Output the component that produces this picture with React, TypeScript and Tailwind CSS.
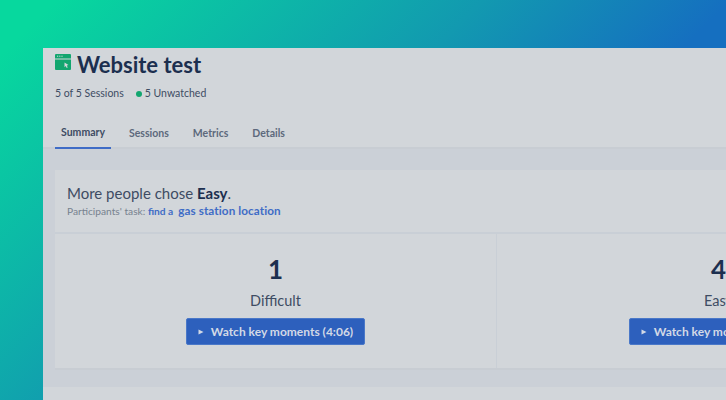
const font = "font-['Lato','Noto_Sans',sans-serif]";

function SessionIcon() {
  return (
    <svg width="16" height="16" viewBox="0 0 16 16" className="shrink-0">
      <path d="M0 1a1 1 0 0 1 1-1h14a1 1 0 0 1 1 1v3.4H0z" fill="#12a66f" />
      <rect x="2" y="1.7" width="1.2" height="1" fill="#d3d7db" />
      <rect x="4.2" y="1.7" width="1.2" height="1" fill="#d3d7db" />
      <rect x="6.4" y="1.7" width="1.2" height="1" fill="#d3d7db" />
      <path d="M0 5.4h16V15a1 1 0 0 1-1 1H1a1 1 0 0 1-1-1z" fill="#12a66f" />
      <path d="M9.5 8.5l4 2.6-1.7.5 .9 1.8-1 .5-.9-1.8-1.3 1.2z" fill="#d3d7db" />
    </svg>
  );
}

function WatchButton({ label }: { label: string }) {
  return (
    <button className="flex h-[27px] w-[179px] shrink-0 items-center justify-center gap-[7px] rounded-[2px] border border-[#4a78c8] bg-[#2d60bd] text-[12px] font-bold text-[#d3d9e6]">
      <svg width="6" height="6" viewBox="0 0 6 6">
        <path d="M0.5 0.5L5.5 3L0.5 5.5z" fill="#d3d9e6" />
      </svg>
      {label}
    </button>
  );
}

function ResultColumn({ count, label, first }: { count: string; label: string; first?: boolean }) {
  return (
    <div className={`flex shrink-0 flex-col items-center pt-[17px] ${first ? "w-[442px] border-r border-[#c9cfd6]" : "w-[443px]"}`}>
      <div className="text-[26px] leading-[36px] font-bold text-[#1c2f4f]">{count}</div>
      <div className="mt-[3px] text-[14.5px] leading-[22px] text-[#3e4c63]">{label}</div>
      <div className="mt-[6px]">
        <WatchButton label="Watch key moments (4:06)" />
      </div>
    </div>
  );
}

export default function App() {
  return (
    <div className={`h-[400px] w-[726px] overflow-hidden bg-[linear-gradient(135deg,#07d89e_5%,#1299b0_43%,#156fc0_65%)] pt-[48px] pl-[43px] ${font}`}>
      <div className="h-[352px] w-[1000px] bg-[#d2d6da]">
        <div className="h-[101px] border-b-2 border-[#c8cdd3] pl-[12px]">
          <div className="flex h-[33px] items-center gap-[6px]">
            <div className="-mt-[5px]">
              <SessionIcon />
            </div>
            <h1 className="text-[22px] leading-[33px] font-bold text-[#1c2f4f]">Website test</h1>
          </div>
          <div className="mt-[4px] flex h-[18px] items-center text-[10.5px] text-[#3e4c63]">
            <span>5 of 5 Sessions</span>
            <span className="mr-[3px] ml-[12px] h-[6px] w-[6px] rounded-full bg-[#12a66f]" />
            <span>5 Unwatched</span>
          </div>
          <div className="mt-[13px] flex h-[33px] text-[10.5px] font-bold text-[#5d697c]">
            <div className="flex w-[56px] items-center justify-center border-b-2 border-[#3f6cc6] pt-[2px] text-[#3e4c63]">Summary</div>
            <div className="ml-[18px] flex items-center gap-[24px] pt-[2px]">
              <span>Sessions</span>
              <span>Metrics</span>
              <span>Details</span>
            </div>
          </div>
        </div>

        <div className="bg-[#cbd0d7] px-[12px] pt-[21px] pb-[17px]">
          <div className="border-b-2 border-[#c8cdd3] bg-[#d2d6da]">
            <div className="h-[64px] border-b-2 border-[#c9cfd6] pt-[13px] pl-[12px]">
              <div className="text-[15px] leading-[20px] text-[#3e4c63]">
                More people chose <span className="font-bold text-[#1c2f4f]">Easy</span>.
              </div>
              <div className="text-[10.2px] leading-[14px] text-[#77828f]">
                Participants' task: <span className="font-bold text-[#3f6cc6]">find a</span>
                <span className="ml-[5px] text-[11.7px] font-bold tracking-[0.1px] text-[#3f6cc6]">gas station location</span>
              </div>
            </div>
            <div className="flex h-[134px]">
              <ResultColumn count="1" label="Difficult" first />
              <ResultColumn count="4" label="Easy" />
            </div>
          </div>
        </div>
        <div className="mx-[12px] h-[20px] bg-[#d2d6da]" />
      </div>
    </div>
  );
}
